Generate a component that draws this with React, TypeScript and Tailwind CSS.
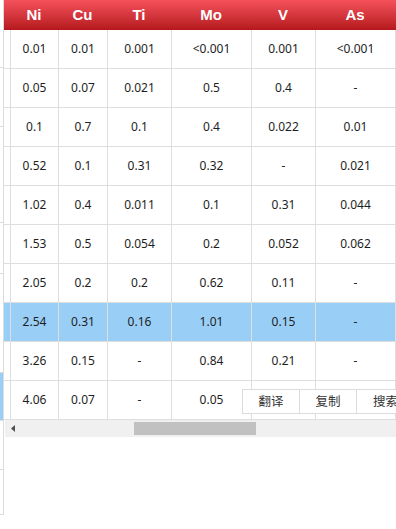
import React from "react";

const cols = [
  { k: "", w: "w-[6px]" },
  { k: "Ni", w: "w-[48px]" },
  { k: "Cu", w: "w-[49px]" },
  { k: "Ti", w: "w-[64px]" },
  { k: "Mo", w: "w-[80px]" },
  { k: "V", w: "w-[64px]" },
  { k: "As", w: "w-[80px]" },
];

const rows: string[][] = [
  ["0.01", "0.01", "0.001", "<0.001", "0.001", "<0.001"],
  ["0.05", "0.07", "0.021", "0.5", "0.4", "-"],
  ["0.1", "0.7", "0.1", "0.4", "0.022", "0.01"],
  ["0.52", "0.1", "0.31", "0.32", "-", "0.021"],
  ["1.02", "0.4", "0.011", "0.1", "0.31", "0.044"],
  ["1.53", "0.5", "0.054", "0.2", "0.052", "0.062"],
  ["2.05", "0.2", "0.2", "0.62", "0.11", "-"],
  ["2.54", "0.31", "0.16", "1.01", "0.15", "-"],
  ["3.26", "0.15", "-", "0.84", "0.21", "-"],
  ["4.06", "0.07", "-", "0.05", "", ""],
];

const leftSegs = [
  { h: "h-[68px]", blue: false },
  { h: "h-[59px]", blue: false },
  { h: "h-[96px]", blue: false },
  { h: "h-[51px]", blue: false },
  { h: "h-[99px]", blue: false },
  { h: "h-[48px]", blue: true },
  { h: "h-[49px]", blue: false },
  { h: "h-[45px]", blue: false },
];

export default function App() {
  return (
    <div
      className="relative w-[396px] h-[529px] bg-white overflow-hidden flex"
      style={{ fontFamily: '"Noto Sans", "Noto Sans CJK SC", sans-serif' }}
    >
      {/* left partial panel */}
      <div className="w-[4px] shrink-0 flex flex-col">
        {leftSegs.map((s, i) => (
          <div
            key={i}
            className={`${s.h} border-b border-r border-[#dcdcdc] ${s.blue ? "bg-[#99cff7]" : "bg-white"}`}
          />
        ))}
      </div>

      {/* main table */}
      <div className="flex-1 flex flex-col overflow-hidden">
        <div className="h-[30px] flex bg-gradient-to-b from-[#f5515c] to-[#b5171c]">
          {cols.map((c, i) => (
            <div
              key={i}
              className={`${c.w} shrink-0 flex items-center justify-center text-white font-bold text-[15px]`}
              style={{ fontFamily: '"Liberation Sans", Arial, sans-serif' }}
            >
              {c.k}
            </div>
          ))}
        </div>
        {rows.map((r, ri) => (
          <div
            key={ri}
            className={`h-[39px] flex border-b border-[#dedede] ${ri === 7 ? "bg-[#99cff7]" : "bg-white"}`}
          >
            <div className="w-[6px] shrink-0" />
            {r.map((v, ci) => (
              <div
                key={ci}
                className={`${cols[ci + 1].w} shrink-0 border-l border-[#dedede] flex items-center justify-center text-[12px] text-[#1e1e1e]`}
              >
                {v}
              </div>
            ))}
            <div className="flex-1 border-l border-[#dedede]" />
          </div>
        ))}
        {/* horizontal scrollbar */}
        <div className="h-[17px] bg-[#f0f0f0] flex items-center ml-px">
          <div className="w-[16px] flex items-center justify-center">
            <svg width="5" height="7" viewBox="0 0 5 7">
              <path d="M4 0 L0 3.5 L4 7 Z" fill="#505050" />
            </svg>
          </div>
          <div className="ml-[113px] w-[122px] h-[13px] bg-[#c1c1c1]" />
        </div>
      </div>

      {/* context menu */}
      <div
        className="absolute left-[242px] top-[389px] h-[25px] flex bg-white border border-[#dcdcdc] text-[12.5px] text-[#333]"
        style={{ fontFamily: '"Noto Sans CJK SC", sans-serif' }}
      >
        <div className="w-[57px] flex items-center justify-center border-r border-[#dcdcdc]">翻译</div>
        <div className="w-[57px] flex items-center justify-center border-r border-[#dcdcdc]">复制</div>
        <div className="w-[57px] flex items-center justify-center">搜索</div>
      </div>
    </div>
  );
}
